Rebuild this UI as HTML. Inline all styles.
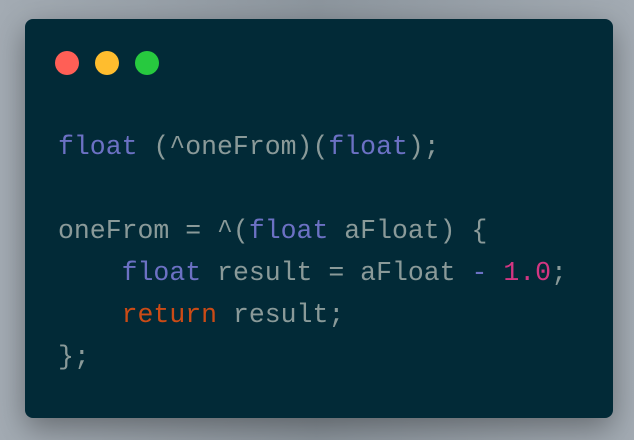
<!DOCTYPE html>
<html><head><style>
html,body{margin:0;padding:0}
body{width:634px;height:440px;background:linear-gradient(90deg,#a3abb3,#8d969e 50%,#a3abb3);position:relative;overflow:hidden}
.card{position:absolute;left:25px;top:19px;width:588px;height:399px;background:#022a37;border-radius:8px;box-shadow:0 10px 30px rgba(0,0,0,.35)}
.dot{position:absolute;top:32px;width:24px;height:24px;border-radius:50%}
pre{position:absolute;left:33px;top:107px;margin:0;font-family:"Liberation Mono",monospace;font-size:26.5px;line-height:42px;color:#8a9a99}
.k{color:#6c71c4}.r{color:#cb4b16}.n{color:#d33682}
</style></head><body>
<div class="card">
<div class="dot" style="left:30px;background:#ff5f56"></div>
<div class="dot" style="left:70px;background:#ffbd2e"></div>
<div class="dot" style="left:110px;background:#27c93f"></div>
<pre><span class="k">float</span> (^oneFrom)(<span class="k">float</span>);

oneFrom = ^(<span class="k">float</span> aFloat) {
    <span class="k">float</span> result = aFloat <span class="k">-</span> <span class="n">1.0</span>;
    <span class="r">return</span> result;
};</pre>
</div>
</body></html>
